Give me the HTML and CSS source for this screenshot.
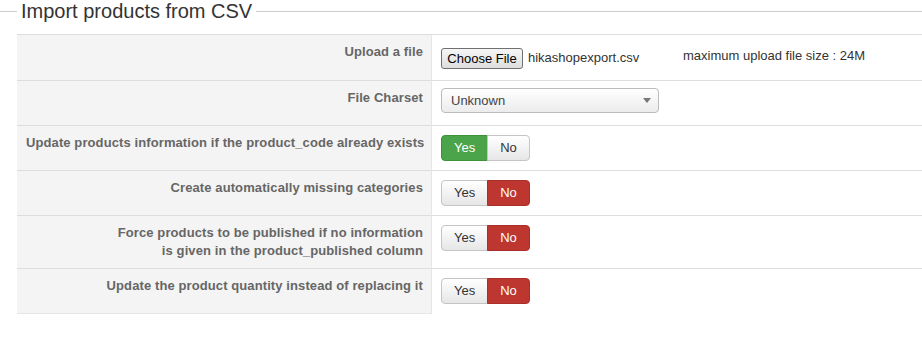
FILE: index.html
```html
<!DOCTYPE html>
<html lang="en">
<head>
  <meta charset="UTF-8" />
  <title>Import products from CSV</title>
  <link rel="stylesheet" href="styles.css">
</head>
<body>

  <fieldset class="adminform">
    <legend>Import products from CSV</legend>
    <table class="admintable">
      <tr>
        <td class="key">Upload a file</td>
        <td class="value">
          <div class="upload">
            <span class="file-widget">
              <button class="file-button" type="button">Choose File</button>
              <span class="file-name">hikashopexport.csv</span>
            </span>
            <span class="max-size">maximum upload file size : 24M</span>
          </div>
        </td>
      </tr>
      <tr>
        <td class="key">File Charset</td>
        <td class="value">
          <div class="fake-select">
            <span>Unknown</span>
            <span class="caret"></span>
          </div>
        </td>
      </tr>
      <tr>
        <td class="key">Update products information if the product_code already exists</td>
        <td class="value">
          <div class="btn-group">
            <span class="btn btn-yes active">Yes</span>
            <span class="btn">No</span>
          </div>
        </td>
      </tr>
      <tr>
        <td class="key">Create automatically missing categories</td>
        <td class="value">
          <div class="btn-group">
            <span class="btn">Yes</span>
            <span class="btn btn-no active">No</span>
          </div>
        </td>
      </tr>
      <tr>
        <td class="key">Force products to be published if no information<br>is given in the product_published column</td>
        <td class="value">
          <div class="btn-group">
            <span class="btn">Yes</span>
            <span class="btn btn-no active">No</span>
          </div>
        </td>
      </tr>
      <tr class="last">
        <td class="key">Update the product quantity instead of replacing it</td>
        <td class="value">
          <div class="btn-group">
            <span class="btn">Yes</span>
            <span class="btn btn-no active">No</span>
          </div>
        </td>
      </tr>
    </table>
  </fieldset>

</body>
</html>
```

FILE: styles.css
```css
body {
  margin: 0;
  font-family: "Liberation Sans", Arial, sans-serif;
  font-size: 13px;
  line-height: 18px;
  color: #333;
  background: #fff;
}

.adminform {
  margin: 0;
  padding: 12px 0 0 17px;
  border: 0;
  border-top: 1px solid #ccc;
}

.adminform legend {
  padding: 0 4px;
  font-size: 20px;
  line-height: 22px;
  color: #333;
}

.admintable {
  width: 100%;
  border-collapse: collapse;
  table-layout: fixed;
}

.admintable td {
  border-top: 1px solid #ddd;
  padding: 8px 8px 8px 9px;
  vertical-align: top;
}

.admintable .key {
  width: 397px;
  background: #f4f4f4;
  border-right: 1px solid #e6e6e6;
  text-align: right;
  white-space: nowrap;
  font-weight: bold;
  color: #666;
  letter-spacing: 0.1px;
}

.admintable .last .key {
  border-bottom: 1px solid #e6e6e6;
}

.upload {
  display: flex;
  align-items: center;
  height: 29px;
}

.file-widget {
  display: flex;
  align-items: center;
  width: 242px;
}

.file-button {
  height: 21px;
  width: 82px;
  padding: 0;
  margin-top: 2px;
  font-family: "Liberation Sans", Arial, sans-serif;
  font-size: 13px;
  color: #000;
  background: linear-gradient(#f6f6f6, #dedede);
  border: 1px solid #707070;
  border-radius: 3px;
}

.file-name {
  margin-left: 5px;
  color: #333;
}

.max-size {
  color: #333;
  margin-top: -4px;
}

.fake-select {
  display: flex;
  align-items: center;
  justify-content: space-between;
  box-sizing: border-box;
  width: 218px;
  height: 25px;
  margin: -1px 0 4px;
  padding: 0 7px 0 9px;
  border: 1px solid #bbb;
  border-radius: 4px;
  background: linear-gradient(#fff, #ececec);
  color: #444;
}

.caret {
  width: 0;
  height: 0;
  border-left: 4px solid transparent;
  border-right: 4px solid transparent;
  border-top: 5px solid #777;
}

.btn-group {
  display: flex;
  margin: 1px 0;
}

.btn {
  display: inline-block;
  padding: 3px 12px;
  line-height: 18px;
  border: 1px solid #c5c5c5;
  background: linear-gradient(#fff, #e6e6e6);
  color: #333;
}

.btn:first-child {
  border-radius: 4px 0 0 4px;
}

.btn:last-child {
  border-radius: 0 4px 4px 0;
  margin-left: -1px;
}

.btn-yes.active {
  background: #4ca44a;
  border-color: #3e913c;
  color: #fff;
}

.btn-no.active {
  background: #bd362f;
  border-color: #a9302a;
  color: #fff;
}
```
